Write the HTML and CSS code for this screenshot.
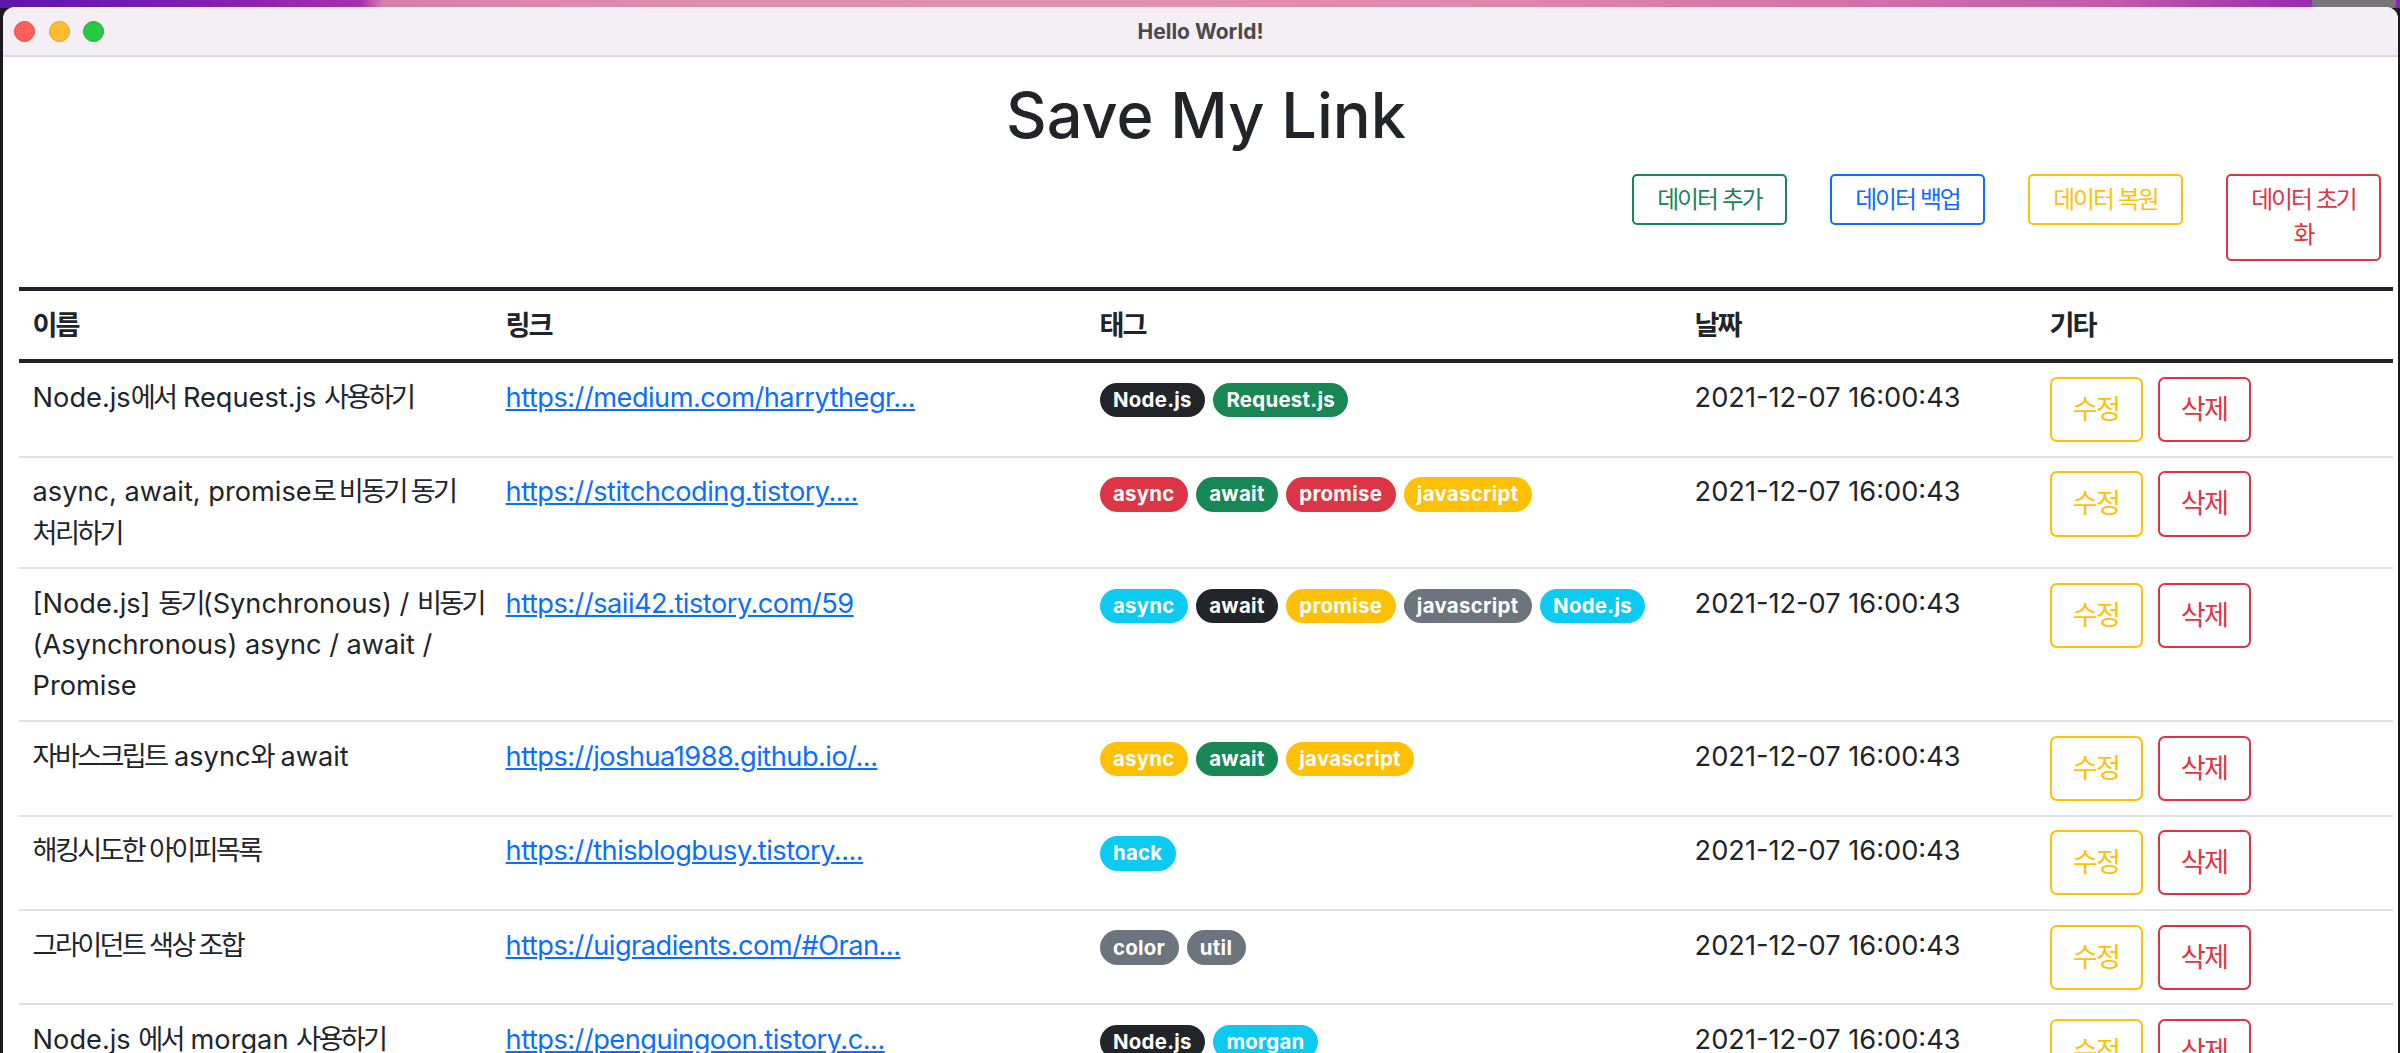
FILE: index.html
```html
<!DOCTYPE html>
<html lang="ko">
<head>
<meta charset="utf-8">
<title>Hello World!</title>
<link rel="stylesheet" href="styles.css">
</head>
<body>
<div class="menu-icon"></div>
<div class="window">
  <div class="titlebar">
    <div class="lights">
      <span class="light red"></span>
      <span class="light yellow"></span>
      <span class="light green"></span>
    </div>
    <div class="title">Hello World!</div>
    <div></div>
  </div>
  <main class="content">
    <h1 class="heading">Save My Link</h1>
    <div class="actions">
      <button class="btn-sm outline-success">데이터 추가</button>
      <button class="btn-sm outline-primary">데이터 백업</button>
      <button class="btn-sm outline-warning">데이터 복원</button>
      <button class="btn-sm outline-danger">데이터 초기화</button>
    </div>
    <table class="links">
      <colgroup>
        <col class="c-name"><col class="c-link"><col class="c-tag"><col class="c-date"><col>
      </colgroup>
      <thead>
        <tr><th>이름</th><th>링크</th><th>태그</th><th>날짜</th><th>기타</th></tr>
      </thead>
      <tbody>
        <tr>
          <td>Node.js<span class="ko">에서</span> Request.js <span class="ko">사용하기</span></td>
          <td><a href="#">https://medium.com/harrythegr...</a></td>
          <td><span class="badge dark">Node.js</span><span class="badge success">Request.js</span></td>
          <td>2021-12-07 16:00:43</td>
          <td><div class="row-actions"><button class="btn warn">수정</button><button class="btn del">삭제</button></div></td>
        </tr>
        <tr>
          <td>async, await, promise<span class="ko">로 비동기 동기</span> <span class="ko nw">처리하기</span></td>
          <td><a href="#">https://stitchcoding.tistory....</a></td>
          <td><span class="badge danger">async</span><span class="badge success">await</span><span class="badge danger">promise</span><span class="badge warning">javascript</span></td>
          <td>2021-12-07 16:00:43</td>
          <td><div class="row-actions"><button class="btn warn">수정</button><button class="btn del">삭제</button></div></td>
        </tr>
        <tr>
          <td><span class="nw">[Node.js] <span class="ko">동기</span>(Synchronous) / <span class="ko">비동기</span></span><wbr>(Asynchronous) async / await / Promise</td>
          <td><a href="#">https://saii42.tistory.com/59</a></td>
          <td><span class="badge info">async</span><span class="badge dark">await</span><span class="badge warning">promise</span><span class="badge secondary">javascript</span><span class="badge info">Node.js</span></td>
          <td>2021-12-07 16:00:43</td>
          <td><div class="row-actions"><button class="btn warn">수정</button><button class="btn del">삭제</button></div></td>
        </tr>
        <tr>
          <td><span class="ko">자바스크립트</span> async<span class="ko">와</span> await</td>
          <td><a href="#">https://joshua1988.github.io/...</a></td>
          <td><span class="badge warning">async</span><span class="badge success">await</span><span class="badge warning">javascript</span></td>
          <td>2021-12-07 16:00:43</td>
          <td><div class="row-actions"><button class="btn warn">수정</button><button class="btn del">삭제</button></div></td>
        </tr>
        <tr>
          <td><span class="ko">해킹시도한 아이피목록</span></td>
          <td><a href="#">https://thisblogbusy.tistory....</a></td>
          <td><span class="badge info">hack</span></td>
          <td>2021-12-07 16:00:43</td>
          <td><div class="row-actions"><button class="btn warn">수정</button><button class="btn del">삭제</button></div></td>
        </tr>
        <tr>
          <td><span class="ko">그라이던트 색상 조합</span></td>
          <td><a href="#">https://uigradients.com/#Oran...</a></td>
          <td><span class="badge secondary">color</span><span class="badge secondary">util</span></td>
          <td>2021-12-07 16:00:43</td>
          <td><div class="row-actions"><button class="btn warn">수정</button><button class="btn del">삭제</button></div></td>
        </tr>
        <tr>
          <td>Node.js <span class="ko">에서</span> morgan <span class="ko">사용하기</span></td>
          <td><a href="#">https://penguingoon.tistory.c...</a></td>
          <td><span class="badge dark">Node.js</span><span class="badge info">morgan</span></td>
          <td>2021-12-07 16:00:43</td>
          <td><div class="row-actions"><button class="btn warn">수정</button><button class="btn del">삭제</button></div></td>
        </tr>
      </tbody>
    </table>
  </main>
</div>
</body>
</html>
```

FILE: styles.css
```css
* { box-sizing: border-box; }

html, body {
  margin: 0;
  height: 100%;
  overflow: hidden;
}

body {
  background:
    linear-gradient(90deg, #5a16ad 0%, #8a1fb3 10%, #a830ac 15%, #d680aa 16%, #e090ad 30%, #e392ae 50%, #dc84ab 65%, #d070a8 78%, #c45aa8 88%, #a030b0 95%, #8a24b6 100%) top left / 100% 8px no-repeat,
    #1c1a1f;
  font-family: Inter, "Noto Sans CJK KR", sans-serif;
  color: #212529;
  position: relative;
}

.menu-icon {
  position: absolute;
  top: 0;
  left: 2312px;
  width: 84px;
  height: 8px;
  background: #77757a;
  border-radius: 0 0 4px 4px;
}

.window {
  margin: 7px 2px 0 3px;
  height: calc(100% - 7px);
  background: #fff;
  border-radius: 12px 12px 0 0;
  overflow: hidden;
  position: relative;
}

.titlebar {
  height: 50px;
  background: #f4eef5;
  border-bottom: 2px solid #dcd7dd;
  display: grid;
  grid-template-columns: 1fr auto 1fr;
  align-items: center;
}

.lights {
  display: flex;
  gap: 13.5px;
  padding-left: 11px;
}

.light {
  width: 21px;
  height: 21px;
  border-radius: 50%;
}
.light.red { background: #ff5f57; border: 1px solid #e5483f; }
.light.yellow { background: #febc2e; border: 1px solid #e0a020; }
.light.green { background: #28c840; border: 1px solid #1ea832; }

.title {
  font-size: 21px;
  font-weight: 700;
  color: #4b494c;
  padding-top: 1px;
}

.content {
  padding: 21px 5px 0 16px;
}

.heading {
  margin: 0 0 20px;
  font-size: 63px;
  font-weight: 500;
  line-height: 1.2;
  text-align: center;
  color: #212529;
}

.actions {
  display: flex;
  justify-content: flex-end;
  align-items: flex-start;
  gap: 43px;
  padding-right: 12px;
  margin-bottom: 26px;
}

.btn-sm {
  width: 155px;
  padding: 6px 13.6px;
  font-family: inherit;
  font-size: 23.8px;
  line-height: 1.5;
  letter-spacing: -0.08em;
  background: transparent;
  border: 2px solid;
  border-radius: 5px;
  text-align: center;
}
.outline-success { color: #198754; border-color: #198754; }
.outline-primary { color: #0d6efd; border-color: #0d6efd; }
.outline-warning { color: #ffc107; border-color: #ffc107; }
.outline-danger { color: #dc3545; border-color: #dc3545; }

.links {
  width: 100%;
  border-collapse: collapse;
  table-layout: fixed;
  font-size: 27.2px;
  line-height: 41.2px;
  border-top: 4px solid #212529;
}

.c-name { width: 473px; }
.c-link { width: 594px; }
.c-tag { width: 595px; }
.c-date { width: 355px; }

.links th {
  text-align: left;
  font-weight: 700;
  letter-spacing: -0.08em;
  padding: 13.6px;
  border-bottom: 4px solid #212529;
}

.links td {
  vertical-align: top;
  padding: 13.6px;
  border-bottom: 2px solid #dee2e6;
}

.ko { letter-spacing: -0.1em; }
.nw { white-space: nowrap; }

.links a {
  color: #0d6efd;
  text-decoration: underline;
  letter-spacing: -0.5px;
}

.badge {
  display: inline-block;
  padding: 7.1px 13.3px;
  margin-right: 8px;
  font-size: 20.4px;
  font-weight: 700;
  letter-spacing: 0.3px;
  line-height: 1;
  color: #fff;
  border-radius: 999px;
  white-space: nowrap;
}
.badge:last-child { margin-right: 0; }
.badge.dark { background: #212529; }
.badge.success { background: #198754; }
.badge.danger { background: #dc3545; }
.badge.warning { background: #ffc107; }
.badge.info { background: #0dcaf0; }
.badge.secondary { background: #6c757d; }

.row-actions {
  display: flex;
  gap: 15px;
}

.btn {
  width: 93px;
  padding: 10px 0;
  font-family: inherit;
  font-size: 27.2px;
  line-height: 41.2px;
  letter-spacing: -0.06em;
  background: transparent;
  border: 2px solid;
  border-radius: 6.8px;
  text-align: center;
}
.btn.warn { color: #ffc107; border-color: #ffc107; }
.btn.del { color: #dc3545; border-color: #dc3545; }
```
